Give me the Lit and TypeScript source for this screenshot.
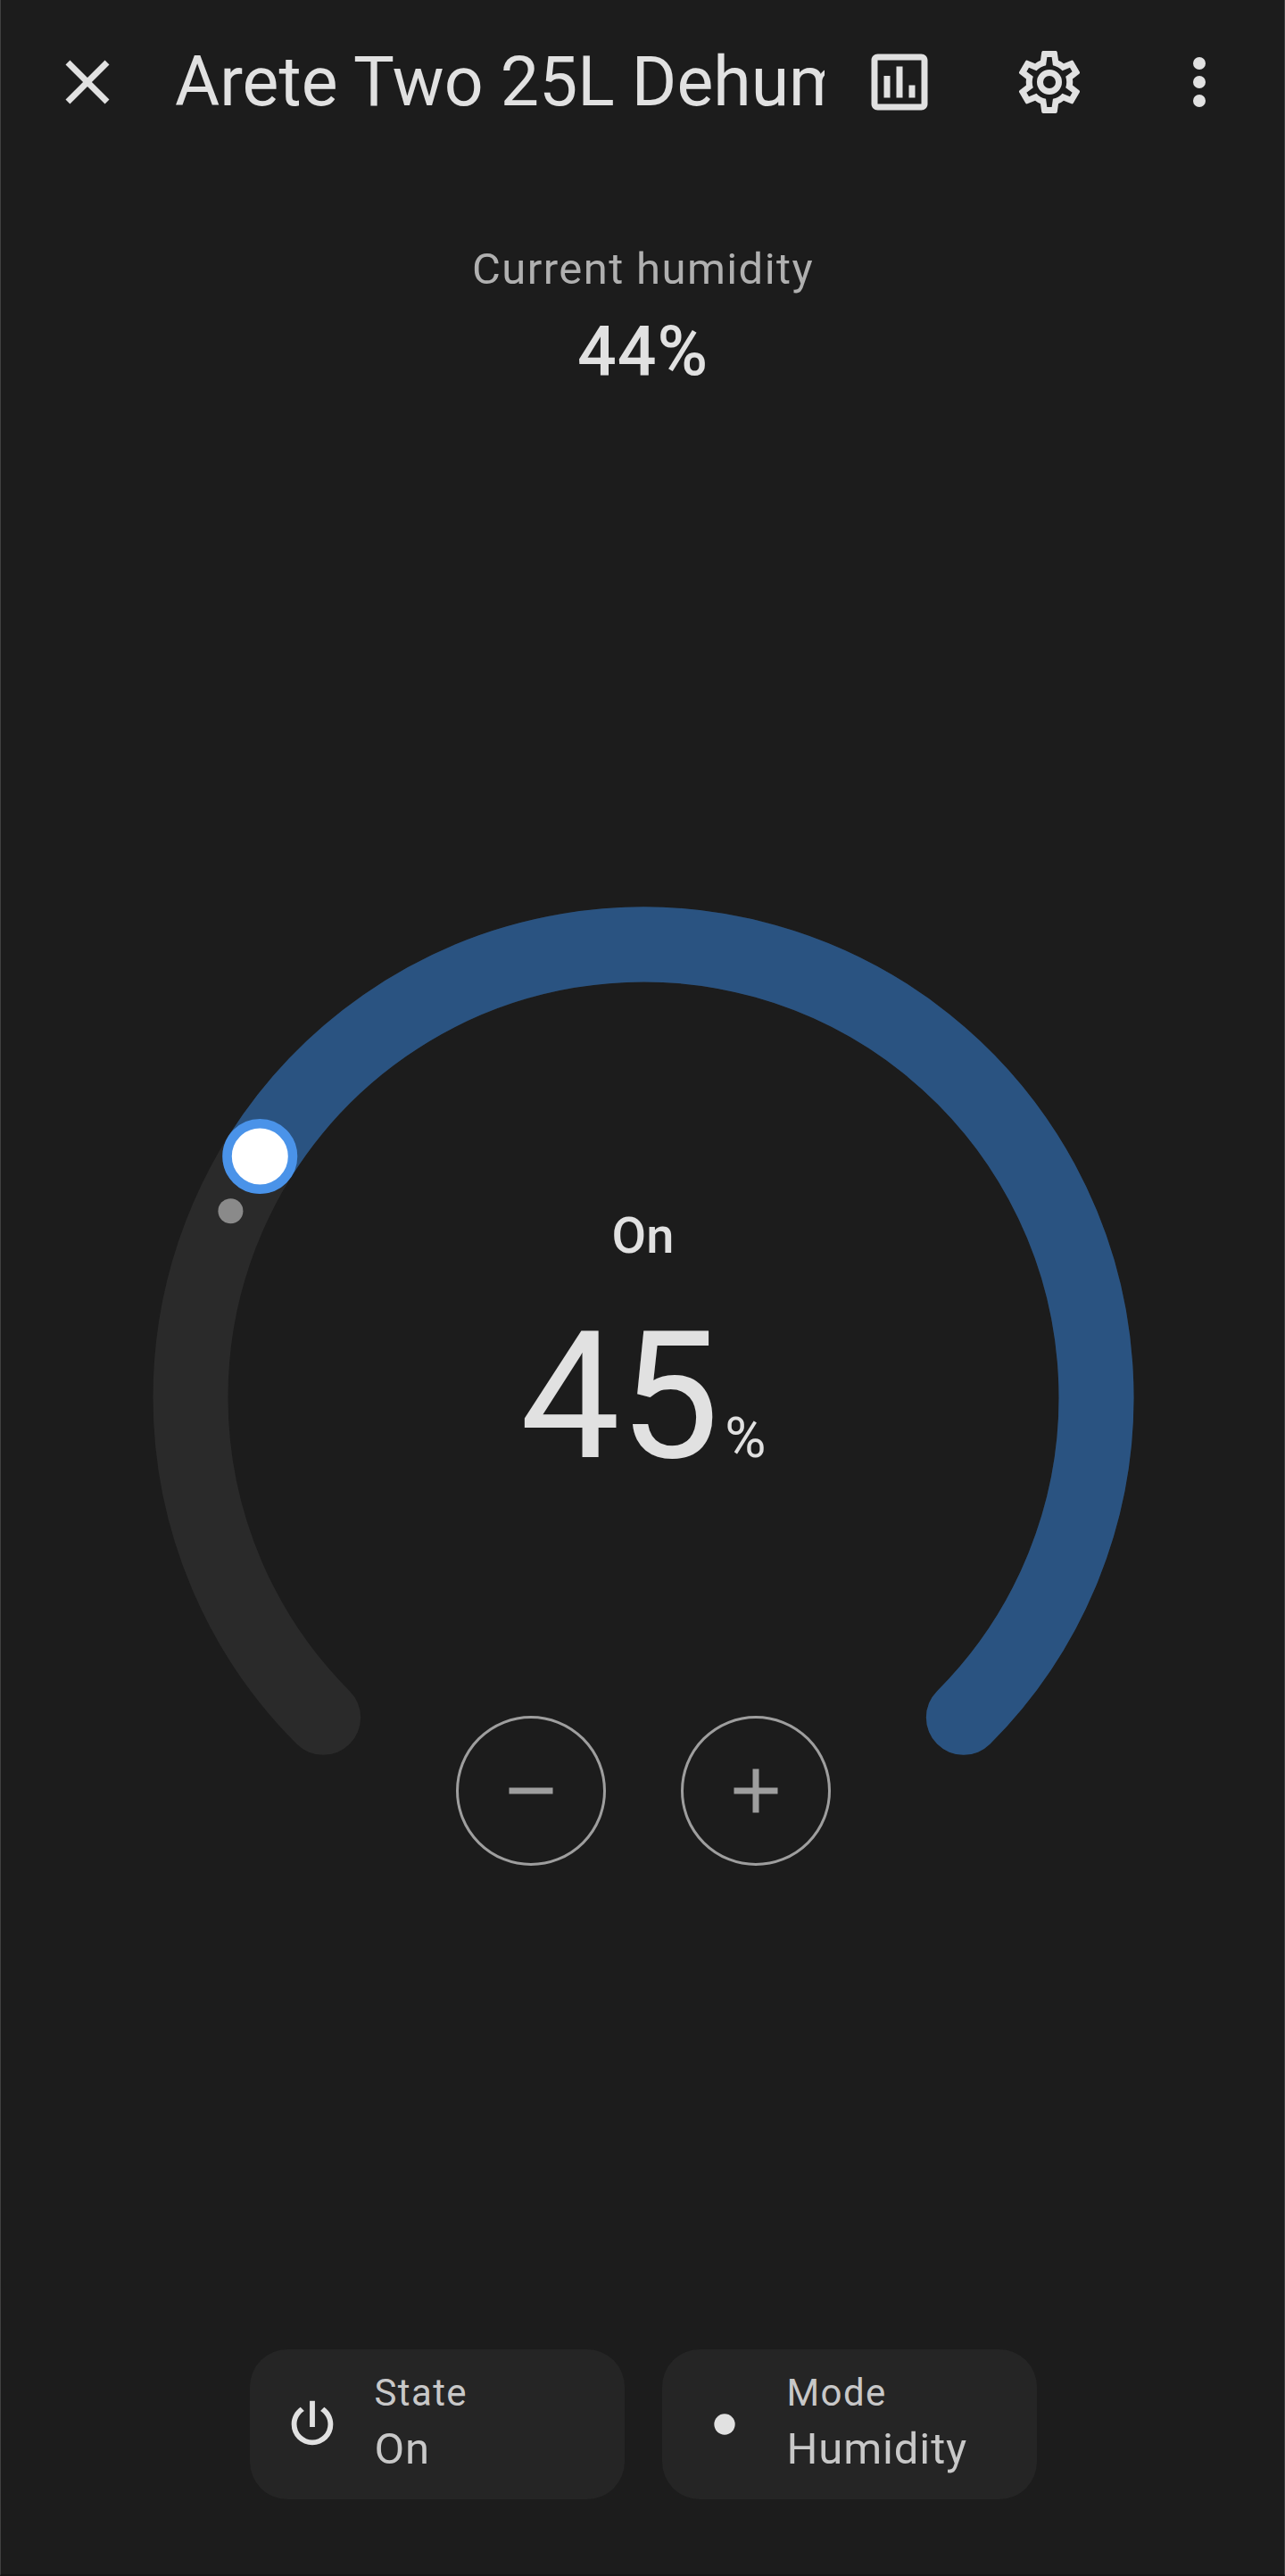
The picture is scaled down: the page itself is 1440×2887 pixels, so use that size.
import { LitElement, html, css, svg } from "lit";
import { customElement, property } from "lit/decorators.js";

const mdiClose = "M19,6.41L17.59,5L12,10.59L6.41,5L5,6.41L10.59,12L5,17.59L6.41,19L12,13.41L17.59,19L19,17.59L13.41,12L19,6.41Z";
const mdiChartBox = "M9 17H7V10H9V17M13 17H11V7H13V17M17 17H15V13H17V17M19 19H5V5H19V19.1M19 3H5C3.9 3 3 3.9 3 5V19C3 20.1 3.9 21 5 21H19C20.1 21 21 20.1 21 19V5C21 3.9 20.1 3 19 3Z";
const mdiCog = "M12,8A4,4 0 0,1 16,12A4,4 0 0,1 12,16A4,4 0 0,1 8,12A4,4 0 0,1 12,8M12,10A2,2 0 0,0 10,12A2,2 0 0,0 12,14A2,2 0 0,0 14,12A2,2 0 0,0 12,10M10,22C9.75,22 9.54,21.82 9.5,21.58L9.13,18.93C8.5,18.68 7.96,18.34 7.44,17.94L4.95,18.95C4.73,19.03 4.46,18.95 4.34,18.73L2.34,15.27C2.21,15.05 2.27,14.78 2.46,14.63L4.57,12.97L4.5,12L4.57,11L2.46,9.37C2.27,9.22 2.21,8.95 2.34,8.73L4.34,5.27C4.46,5.05 4.73,4.96 4.95,5.05L7.44,6.05C7.96,5.66 8.5,5.32 9.13,5.07L9.5,2.42C9.54,2.18 9.75,2 10,2H14C14.25,2 14.46,2.18 14.5,2.42L14.87,5.07C15.5,5.32 16.04,5.66 16.56,6.05L19.05,5.05C19.27,4.96 19.54,5.05 19.66,5.27L21.66,8.73C21.79,8.95 21.73,9.22 21.54,9.37L19.43,11L19.5,12L19.43,13L21.54,14.63C21.73,14.78 21.79,15.05 21.66,15.27L19.66,18.73C19.54,18.95 19.27,19.04 19.05,18.95L16.56,17.95C16.04,18.34 15.5,18.68 14.87,18.93L14.5,21.58C14.46,21.82 14.25,22 14,22H10M11.25,4L10.88,6.61C9.68,6.86 8.62,7.5 7.85,8.39L5.44,7.35L4.69,8.65L6.8,10.2C6.4,11.37 6.4,12.64 6.8,13.8L4.68,15.36L5.43,16.66L7.86,15.62C8.63,16.5 9.68,17.14 10.87,17.38L11.24,20H12.76L13.13,17.39C14.32,17.14 15.37,16.5 16.14,15.62L18.57,16.66L19.32,15.36L17.2,13.81C17.6,12.64 17.6,11.37 17.2,10.2L19.31,8.65L18.56,7.35L16.15,8.39C15.38,7.5 14.32,6.86 13.12,6.62L12.75,4H11.25Z";
const mdiDots = "M12,16A2,2 0 0,1 14,18A2,2 0 0,1 12,20A2,2 0 0,1 10,18A2,2 0 0,1 12,16M12,10A2,2 0 0,1 14,12A2,2 0 0,1 12,14A2,2 0 0,1 10,12A2,2 0 0,1 12,10M12,4A2,2 0 0,1 14,6A2,2 0 0,1 12,8A2,2 0 0,1 10,6A2,2 0 0,1 12,4Z";
const mdiPower = "M16.56,5.44L15.11,6.89C16.84,7.94 18,9.83 18,12A6,6 0 0,1 12,18A6,6 0 0,1 6,12C6,9.83 7.16,7.94 8.88,6.88L7.44,5.44C5.36,6.88 4,9.28 4,12A8,8 0 0,0 12,20A8,8 0 0,0 20,12C20,9.28 18.64,6.88 16.56,5.44M13,3H11V13H13";
const mdiCircleMedium = "M12,8A4,4 0 0,0 8,12A4,4 0 0,0 12,16A4,4 0 0,0 16,12A4,4 0 0,0 12,8Z";
const mdiMinus = "M19,13H5V11H19V13Z";
const mdiPlus = "M19,13H13V19H11V13H5V11H11V5H13V11H19V13Z";

const icon = (d: string) => html`<svg class="icon" viewBox="0 0 24 24"><path d=${d}></path></svg>`;

// dial coordinates are in the 320 unit viewBox, 135deg start, 270deg sweep
const CX = 160;
const CY = 160;
const R = 145;
const MIN = 25;
const MAX = 95;

const point = (deg: number) => {
  const a = (deg * Math.PI) / 180;
  return [CX + R * Math.cos(a), CY + R * Math.sin(a)];
};

const arc = (from: number, to: number) => {
  const [x1, y1] = point(from);
  const [x2, y2] = point(to);
  const large = to - from > 180 ? 1 : 0;
  return `M ${x1} ${y1} A ${R} ${R} 0 ${large} 1 ${x2} ${y2}`;
};

@customElement("climate-dial")
export class ClimateDial extends LitElement {
  @property({ type: Number }) public target = 45;
  @property({ type: Number }) public current = 44;
  @property() public status = "On";

  private angle(value: number) {
    return 135 + ((value - MIN) / (MAX - MIN)) * 270;
  }

  protected render() {
    const targetAngle = this.angle(this.target);
    const [hx, hy] = point(targetAngle);
    const [dx, dy] = point(this.angle(this.current) - 4);
    return html`
      <div class="dial">
        <svg class="ring" viewBox="0 0 320 320">
          ${svg`
            <path class="track" d=${arc(135, 405)}></path>
            <path class="fill" d=${arc(targetAngle, 405)}></path>
            <circle class="current" cx=${dx} cy=${dy} r="4"></circle>
            <circle class="handle" cx=${hx} cy=${hy} r="10.5"></circle>
          `}
        </svg>
        <div class="center">
          <div class="status">${this.status}</div>
          <div class="big">
            <span class="num">${this.target}</span><span class="unit">%</span>
          </div>
          <div class="buttons">
            <button class="round">${icon(mdiMinus)}</button>
            <button class="round">${icon(mdiPlus)}</button>
          </div>
        </div>
      </div>
    `;
  }

  static styles = css`
    :host {
      display: block;
      width: 1120px;
      height: 1120px;
    }
    .dial {
      position: relative;
      width: 100%;
      height: 100%;
    }
    .ring {
      display: block;
      width: 100%;
      height: 100%;
    }
    .track,
    .fill {
      fill: none;
      stroke-width: 24;
      stroke-linecap: round;
    }
    .track {
      stroke: #2a2a2a;
    }
    .fill {
      stroke: #2a5381;
    }
    .current {
      fill: #8a8a8a;
    }
    .handle {
      fill: #ffffff;
      stroke: #4a93e9;
      stroke-width: 3;
    }
    .center {
      position: absolute;
      inset: 0;
      display: flex;
      flex-direction: column;
      align-items: center;
      padding-top: 337px;
      box-sizing: border-box;
      color: #e1e1e1;
    }
    .status {
      font-size: 56px;
      font-weight: 500;
      line-height: 84px;
    }
    .big {
      display: flex;
      align-items: baseline;
      line-height: 224px;
      margin-top: 26px;
    }
    .num {
      font-size: 199.5px;
      font-weight: 400;
      letter-spacing: -0.875px;
    }
    .unit {
      font-size: 63px;
      font-weight: 400;
      margin-left: 7px;
    }
    .buttons {
      display: flex;
      gap: 84px;
      margin-top: 199px;
    }
    .round {
      width: 168px;
      height: 168px;
      padding: 0;
      display: flex;
      align-items: center;
      justify-content: center;
      background: none;
      border: 3px solid #9e9e9e;
      border-radius: 50%;
      box-sizing: border-box;
    }
    .icon {
      width: 84px;
      height: 84px;
      fill: #9e9e9e;
    }
  `;
}

@customElement("app-root")
export class AppRoot extends LitElement {
  protected render() {
    return html`
      <div class="page">
        <header class="bar">
          <button class="icon-btn">${icon(mdiClose)}</button>
          <div class="title">Arete Two 25L Dehumidifier</div>
          <button class="icon-btn">${icon(mdiChartBox)}</button>
          <button class="icon-btn">${icon(mdiCog)}</button>
          <button class="icon-btn">${icon(mdiDots)}</button>
        </header>

        <div class="info">
          <div class="info-label">Current humidity</div>
          <div class="info-value">44%</div>
        </div>

        <climate-dial class="gauge"></climate-dial>

        <div class="chips">
          <div class="chip">
            ${icon(mdiPower)}
            <div class="chip-text">
              <span class="chip-label">State</span>
              <span class="chip-value">On</span>
            </div>
          </div>
          <div class="chip">
            ${icon(mdiCircleMedium)}
            <div class="chip-text">
              <span class="chip-label">Mode</span>
              <span class="chip-value">Humidity</span>
            </div>
          </div>
        </div>
      </div>
    `;
  }

  static styles = css`
    :host {
      display: block;
      width: 1440px;
      height: 2887px;
      font-family: Roboto, "Liberation Sans", sans-serif;
    }
    .page {
      display: flex;
      flex-direction: column;
      align-items: center;
      height: 2887px;
      box-sizing: border-box;
      padding-left: 1px;
      background: #1c1c1c;
      border-left: 1px solid #404040;
      border-right: 1px solid #404040;
      border-bottom: 2px solid #151515;
      color: #e1e1e1;
    }
    .bar {
      display: flex;
      align-items: center;
      align-self: stretch;
      height: 184px;
      padding: 0 11px 0 12px;
    }
    .icon-btn {
      flex: none;
      width: 168px;
      height: 168px;
      padding: 0;
      display: flex;
      align-items: center;
      justify-content: center;
      background: none;
      border: none;
    }
    .icon {
      flex: none;
      width: 84px;
      height: 84px;
      fill: #e1e1e1;
    }
    .title {
      flex: 1;
      min-width: 0;
      margin-left: 14px;
      font-size: 77px;
      font-weight: 400;
      line-height: 112px;
      white-space: nowrap;
      overflow: hidden;
    }
    .info {
      display: flex;
      flex-direction: column;
      align-items: center;
      margin-top: 84px;
    }
    .info-label {
      font-size: 49px;
      line-height: 68px;
      letter-spacing: 1.4px;
      color: #b0b0b0;
    }
    .info-value {
      margin-top: 2px;
      font-size: 77px;
      font-weight: 500;
      line-height: 112px;
      letter-spacing: 1px;
    }
    .gauge {
      margin-top: 556px;
    }
    .chips {
      display: flex;
      gap: 42px;
      margin-top: 507px;
    }
    .chip {
      display: flex;
      align-items: center;
      gap: 35px;
      width: 420px;
      height: 168px;
      padding-left: 35px;
      box-sizing: border-box;
      border-radius: 42px;
      background: #252525;
    }
    .chip .icon {
      width: 70px;
      height: 70px;
    }
    .chip-text {
      display: flex;
      flex-direction: column;
      color: #c8c8c8;
    }
    .chip-label {
      font-size: 42px;
      line-height: 56px;
      letter-spacing: 1.4px;
    }
    .chip-value {
      font-size: 49px;
      line-height: 70px;
      letter-spacing: 0.875px;
    }
  `;
}
